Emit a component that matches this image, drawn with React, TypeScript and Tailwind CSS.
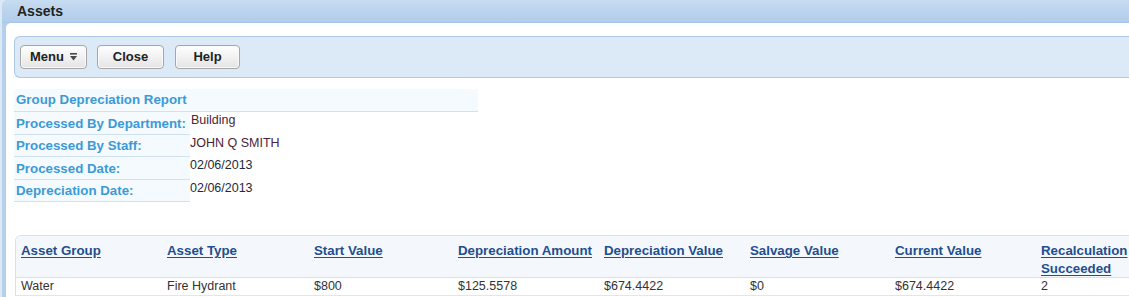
import React from "react";

const labelRows = [
  { label: "Processed By Department:", value: "Building", color: "text-[#4a2436]", pl: "pl-[1px]" },
  { label: "Processed By Staff:", value: "JOHN Q SMITH", color: "text-[#4a2436]", pl: "pl-0" },
  { label: "Processed Date:", value: "02/06/2013", color: "text-[#1e2a3c]", pl: "pl-0" },
  { label: "Depreciation Date:", value: "02/06/2013", color: "text-[#1e2a3c]", pl: "pl-0" },
];

const cols = [
  { h: "Asset Group", v: "Water", w: "w-[146px]" },
  { h: "Asset Type", v: "Fire Hydrant", w: "w-[147px]" },
  { h: "Start Value", v: "$800", w: "w-[144px]" },
  { h: "Depreciation Amount", v: "$125.5578", w: "w-[146px]" },
  { h: "Depreciation Value", v: "$674.4422", w: "w-[146px]" },
  { h: "Salvage Value", v: "$0", w: "w-[145px]" },
  { h: "Current Value", v: "$674.4422", w: "w-[146px]" },
  { h: "Recalculation Succeeded", v: "2", w: "w-[100px]" },
];

function Btn({ children, w, extra = "" }: { children: React.ReactNode; w: string; extra?: string }) {
  return (
    <div
      className={`${w} ${extra} h-[24px] flex items-center justify-center rounded-[4px] border border-[#a6a6a6] bg-gradient-to-b from-white to-[#e4e4e4] text-[13px] font-bold text-[#222] shadow-[inset_0_0_0_1px_#fafafa]`}
    >
      {children}
    </div>
  );
}

export default function App() {
  return (
    <div className="w-[1129px] h-[297px] overflow-hidden bg-[#dbe8f5] pl-[2px] font-['Liberation_Sans',Arial,sans-serif]">
      <div className="h-full bg-[#b6cfeb] rounded-tl-[6px] pl-[4px] flex flex-col">
        <div className="h-[23px] -ml-[4px] pl-[15px] pt-[1px] rounded-tl-[6px] bg-gradient-to-b from-[#c7dcf1] via-[#bbd3ee] to-[#b2cdea] flex items-center text-[14px] font-bold text-[#222] border-b border-[#a8c6e5]">
          Assets
        </div>
        <div className="flex-1 bg-white rounded-tl-[5px] pl-[8px] pt-[13px] flex flex-col min-w-0">
          {/* Toolbar */}
          <div className="h-[42px] w-[1200px] border border-r-0 border-[#adc9e6] bg-[#dce9f6] rounded-l-[6px] flex items-center pl-[5px] gap-[10px]">
            <Btn w="w-[67px]">
              <span className="flex items-center gap-[6px]">
                Menu
                <svg width="7" height="8" viewBox="0 0 7 8">
                  <rect x="0" y="0" width="7" height="1.6" fill="#4a4a4a" />
                  <polygon points="0,3 7,3 3.5,7.5" fill="#4a4a4a" />
                </svg>
              </span>
            </Btn>
            <Btn w="w-[67px]">Close</Btn>
            <Btn w="w-[65px]" extra="ml-[1px]">Help</Btn>
          </div>

          {/* Report info */}
          <div className="mt-[11px] w-[464px]">
            <div className="h-[23px] bg-[#f5faff] border-b border-[#d0e2f2] flex items-center pl-[2px] text-[13.3px] font-bold text-[#3b9ad6]">
              Group Depreciation Report
            </div>
            {labelRows.map((r) => (
              <div key={r.label} className="flex h-[22.5px]">
                <div className="w-[176px] bg-[#f5faff] border-b border-[#d0e2f2] flex items-center pt-[2px] pl-[2px] text-[13.3px] font-bold text-[#3b9ad6] whitespace-nowrap">
                  {r.label}
                </div>
                <div className={`${r.pl} pt-[1px] text-[12.5px] leading-[15px] ${r.color}`}>{r.value}</div>
              </div>
            ))}
          </div>

          {/* Grid */}
          <div className="mt-[33px] ml-[1px] w-[1200px] border border-r-0 border-b-0 border-[#d3e2f1] rounded-tl-[6px] overflow-hidden">
            <div className="flex bg-[#f4f8fd] h-[42px] border-b border-[#d3e2f1] pl-[5px] pt-[6px]">
              {cols.map((c) => (
                <div key={c.h} className={`${c.w} shrink-0 text-[13.3px] leading-[18px] font-bold text-[#1f4f8d]`}>
                  <span className="underline underline-offset-[2px]">{c.h}</span>
                </div>
              ))}
            </div>
            <div className="flex h-[18px] border-b border-[#dde7f1] pl-[5px] items-center">
              {cols.map((c) => (
                <div key={c.h} className={`${c.w} shrink-0 text-[12.5px] text-[#333]`}>
                  {c.v}
                </div>
              ))}
            </div>
          </div>
        </div>
      </div>
    </div>
  );
}
